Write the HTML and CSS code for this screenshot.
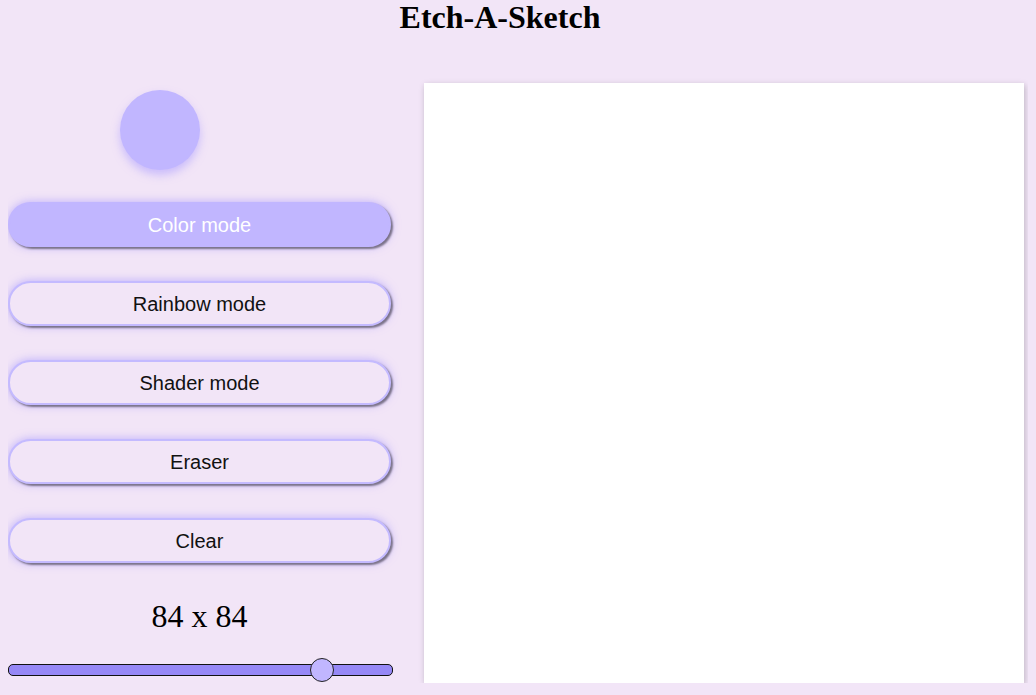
FILE: index.html
```html
<!DOCTYPE html>
<html>
<head>
<meta charset="utf-8">
<title>Etch-A-Sketch</title>
<link rel="stylesheet" href="styles.css">
</head>
<body>
<h1 class="title">Etch-A-Sketch</h1>
<main class="main">
  <section class="controls">
    <div class="swatch"></div>
    <button class="btn active">Color mode</button>
    <button class="btn">Rainbow mode</button>
    <button class="btn">Shader mode</button>
    <button class="btn">Eraser</button>
    <button class="btn">Clear</button>
    <div class="size">84 x 84</div>
    <input class="slider" type="range" min="1" max="100" value="84">
  </section>
  <div class="board"></div>
</main>
</body>
</html>
```

FILE: styles.css
```css
html, body {
  background: #f2e5f7;
}
body {
  margin: 0 8px;
  font-family: "Liberation Serif", "Times New Roman", serif;
  color: #000;
}
.title {
  margin: 0;
  font-size: 32px;
  line-height: 34px;
  font-weight: bold;
  text-align: center;
  padding-right: 36px;
}
.main {
  display: flex;
  gap: 33px;
  margin-top: 49px;
  align-items: flex-start;
}
.controls {
  width: 383px;
  display: flex;
  flex-direction: column;
  padding-top: 7px;
}
.swatch {
  width: 80px;
  height: 80px;
  border-radius: 50%;
  background: #c1b6ff;
  margin-left: 112px;
  box-shadow: 0 5px 8px rgba(170, 155, 255, 0.55);
  margin-bottom: 32px;
}
.btn {
  height: 45px;
  width: 383px;
  margin-bottom: 34px;
  border-radius: 23px;
  border: 2px solid #c4baff;
  background: #f2e5f7;
  font-family: "Liberation Sans", Arial, sans-serif;
  font-size: 20px;
  color: #111;
  box-shadow: 2px 2px 2px #7a7288, 0 0 10px rgba(150, 135, 255, 0.6);
  padding: 2px 0 0 0;
}
.btn.active {
  background: #c1b6ff;
  border-color: #c1b6ff;
  color: #fff;
}
.size {
  text-align: center;
  font-size: 32px;
  line-height: 36px;
  margin-top: 1px;
}
.slider {
  -webkit-appearance: none;
  appearance: none;
  width: 383px;
  height: 10px;
  margin: 30px 0 0 0;
  background: #9688f6;
  border: 1px solid #111;
  border-radius: 5px;
  outline: none;
}
.slider::-webkit-slider-thumb {
  -webkit-appearance: none;
  appearance: none;
  width: 24px;
  height: 24px;
  border-radius: 50%;
  background: #c1b6ff;
  border: 1px solid #222;
}
.board {
  width: 600px;
  height: 600px;
  background: #fff;
  box-shadow: 1px 2px 6px rgba(0, 0, 0, 0.22);
  flex-shrink: 0;
}
```
